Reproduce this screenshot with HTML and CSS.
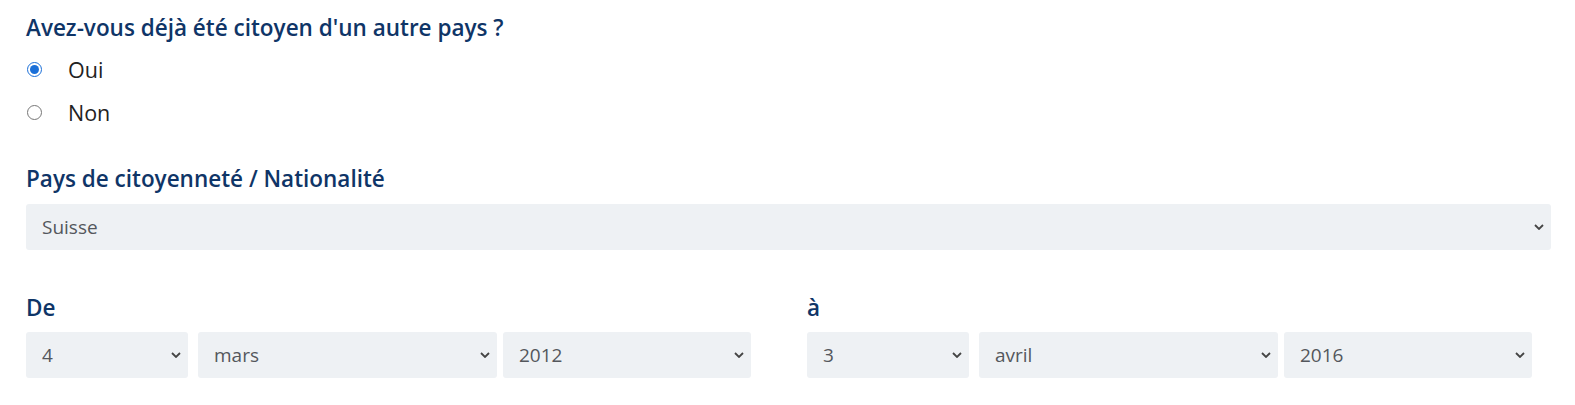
FILE: index.html
```html
<!DOCTYPE html>
<html lang="fr">
<head>
    <meta charset="UTF-8">
    <meta name="viewport" content="width=device-width, initial-scale=1.0">
    <title>Citoyenneté</title>
    <link rel="stylesheet" href="styles.css">
</head>
<body>
    <form class="form">
        <h2 class="question">Avez-vous déjà été citoyen d'un autre pays ?</h2>
        <div class="radio-group">
            <label class="radio-row">
                <input type="radio" name="autre-pays" value="oui" checked>
                <span>Oui</span>
            </label>
            <label class="radio-row">
                <input type="radio" name="autre-pays" value="non">
                <span>Non</span>
            </label>
        </div>

        <label class="field-label" for="pays">Pays de citoyenneté / Nationalité</label>
        <div class="select-wrap full">
            <select id="pays">
                <option>Suisse</option>
            </select>
            <svg class="chevron" viewBox="0 0 10 6"><path d="M1 1l4 4 4-4"/></svg>
        </div>

        <div class="dates">
            <div class="date-col">
                <span class="field-label">De</span>
                <div class="date-row">
                    <div class="select-wrap day">
                        <select><option>4</option></select>
                        <svg class="chevron" viewBox="0 0 10 6"><path d="M1 1l4 4 4-4"/></svg>
                    </div>
                    <div class="select-wrap month">
                        <select><option>mars</option></select>
                        <svg class="chevron" viewBox="0 0 10 6"><path d="M1 1l4 4 4-4"/></svg>
                    </div>
                    <div class="select-wrap year">
                        <select><option>2012</option></select>
                        <svg class="chevron" viewBox="0 0 10 6"><path d="M1 1l4 4 4-4"/></svg>
                    </div>
                </div>
            </div>
            <div class="date-col">
                <span class="field-label">à</span>
                <div class="date-row">
                    <div class="select-wrap day">
                        <select><option>3</option></select>
                        <svg class="chevron" viewBox="0 0 10 6"><path d="M1 1l4 4 4-4"/></svg>
                    </div>
                    <div class="select-wrap month">
                        <select><option>avril</option></select>
                        <svg class="chevron" viewBox="0 0 10 6"><path d="M1 1l4 4 4-4"/></svg>
                    </div>
                    <div class="select-wrap year">
                        <select><option>2016</option></select>
                        <svg class="chevron" viewBox="0 0 10 6"><path d="M1 1l4 4 4-4"/></svg>
                    </div>
                </div>
            </div>
        </div>
    </form>
</body>
</html>
```

FILE: styles.css
```css
body {
    margin: 0;
    background: #fff;
    font-family: 'Open Sans', 'Noto Sans', sans-serif;
    color: #222;
}

.form {
    padding: 14px 24px 0 26px;
}

.question,
.field-label {
    display: block;
    margin: 0;
    font-size: 22.5px;
    line-height: 28px;
    font-weight: 600;
    color: #0f3567;
}

.radio-group {
    margin: 6px 0 31px;
}

.radio-row {
    display: flex;
    align-items: center;
    height: 43px;
    font-size: 21.5px;
    color: #222;
    cursor: pointer;
}

.radio-row input {
    width: 15px;
    height: 15px;
    margin: 0 26px 0 1px;
    accent-color: #1a6fd8;
}

.select-wrap {
    position: relative;
    background: #eef1f4;
    border-radius: 3px;
    height: 46px;
}

.select-wrap select {
    appearance: none;
    width: 100%;
    height: 100%;
    border: none;
    background: transparent;
    padding: 0 30px 0 16px;
    font-family: inherit;
    font-size: 19px;
    color: #54575c;
}

.select-wrap.full {
    margin-top: 11px;
}

.chevron {
    position: absolute;
    right: 7px;
    top: 50%;
    width: 10px;
    height: 6px;
    margin-top: -3px;
    fill: none;
    stroke: #444;
    stroke-width: 1.8;
    pointer-events: none;
}

.dates {
    display: flex;
    gap: 56px;
    margin-top: 44px;
}

.date-col {
    width: 725px;
}

.date-row {
    display: flex;
    margin-top: 10px;
}

.day {
    width: 162px;
    margin-right: 10px;
}

.month {
    width: 299px;
    margin-right: 6px;
}

.year {
    width: 248px;
}
```
